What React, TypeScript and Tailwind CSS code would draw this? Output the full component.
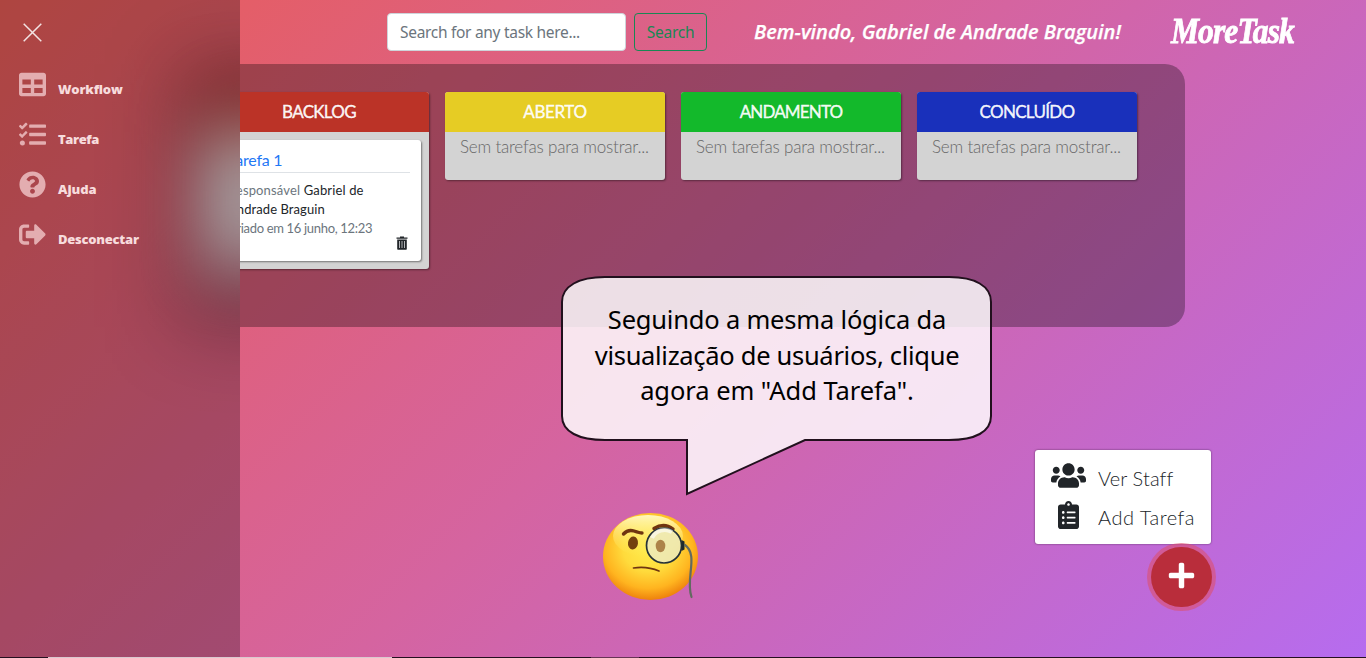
import React from "react";
import { FaTable, FaTasks, FaQuestionCircle, FaSignOutAlt, FaUsers, FaClipboardList, FaPlus } from "react-icons/fa";

const columns = [
  { title: "BACKLOG", color: "bg-[#bb3327]", space: "tracking-[-0.7px]" },
  { title: "ABERTO", color: "bg-[#e6cc24]", space: "tracking-[-0.4px]" },
  { title: "ANDAMENTO", color: "bg-[#13b92b]", space: "tracking-[-0.85px]" },
  { title: "CONCLUÍDO", color: "bg-[#1930bb]", space: "tracking-[-0.7px]" },
];

const links = [
  { label: "Workflow", Icon: FaTable, space: "tracking-[-0.2px]" },
  { label: "Tarefa", Icon: FaTasks, space: "tracking-[-0.4px]" },
  { label: "Ajuda", Icon: FaQuestionCircle, space: "tracking-[-0.05px]" },
  { label: "Desconectar", Icon: FaSignOutAlt, space: "tracking-[-0.25px]" },
];

function TaskCard() {
  return (
    <div className="mx-2 mt-2 flex h-[121px] flex-col rounded-[3px] bg-white px-[11px] pt-[9px] shadow-[1px_1px_2px_rgba(0,0,0,0.45)]">
      <div className="h-6 border-b border-[#dee2e6] font-[Lato] text-[16px] leading-[22px] tracking-[-0.25px] text-[#1f78f5]">Tarefa 1</div>
      <div className="mt-[8px] whitespace-nowrap font-[Lato] text-[13px] leading-[19px] tracking-[0.08px] text-[#6c757d]">
        <div className="tracking-[0.15px]">Responsável <span className="text-[#212529]">Gabriel de</span></div>
        <div className="text-[#212529]">Andrade Braguin</div>
        <div className="tracking-[-0.32px]">Criado em 16 junho, 12:23</div>
      </div>
      <svg className="-mt-[2px] ml-auto mr-[2px] h-[14px] w-[12px] shrink-0" viewBox="0 0 12 14">
        <path d="M4 0.500h4v1h3.500v1.300H0.500V1.500H4zM1.200 3.600h9.600V13q0 .7-.7.7H1.900q-.7 0-.7-.7z" fill="#212529" />
        <path d="M3.500 5v7M6 5v7M8.500 5v7" stroke="#c4c6c8" strokeWidth="0.9" />
      </svg>
    </div>
  );
}

function Monocle() {
  return (
    <svg className="absolute left-[602px] top-[511px] h-[92px] w-[98px]" viewBox="0 0 98 92">
      <defs>
        <radialGradient id="face" cx="0.48" cy="0.4" r="0.6">
          <stop offset="0" stopColor="#ffed4f" />
          <stop offset="0.45" stopColor="#ffdb3c" />
          <stop offset="0.78" stopColor="#ffb41f" />
          <stop offset="1" stopColor="#ee820c" />
        </radialGradient>
        <linearGradient id="shine" x1="0" y1="0" x2="0" y2="1">
          <stop offset="0" stopColor="#fffbc4" stopOpacity="0.95" />
          <stop offset="1" stopColor="#ffec55" stopOpacity="0" />
        </linearGradient>
      </defs>
      <ellipse cx="48.5" cy="45.5" rx="47.5" ry="43.5" fill="url(#face)" />
      <ellipse cx="46" cy="25" rx="35" ry="21" fill="url(#shine)" />
      <path d="M21.500 23Q26 18 32 20T40 22" fill="none" stroke="#6f3510" strokeWidth="3.400" strokeLinecap="round" strokeLinejoin="round" />
      <path d="M52 17.500Q62 11 71 18" fill="none" stroke="#6f3510" strokeWidth="3.400" strokeLinecap="round" />
      <ellipse cx="31" cy="32" rx="5" ry="6.500" fill="#74400e" transform="rotate(8 31 32)" />
      <circle cx="62" cy="34.500" r="17.500" fill="#eee9b8" fillOpacity="0.88" stroke="#263238" strokeWidth="1.700" />
      <path d="M50 27a14 14 0 0 1 20-6" stroke="#fff" strokeOpacity="0.6" strokeWidth="4" fill="none" />
      <ellipse cx="58.500" cy="35" rx="4.800" ry="6.200" fill="#ad8349" />
      <path d="M31.500 57Q45 55 57 60" fill="none" stroke="#6f3510" strokeWidth="1.700" strokeLinecap="round" />
      <path d="M79.500 29l3 1.500v8l-3 1.500z" fill="#1d282c" />
      <path d="M83 34C97 44 83 68 89.500 86" fill="none" stroke="#626a60" strokeWidth="2.200" strokeLinecap="round" />
    </svg>
  );
}

export default function App() {
  return (
    <div className="relative h-[658px] w-[1366px] overflow-hidden bg-[linear-gradient(135deg,#e95c56_0%,#d564a0_50%,#b66cef_100%)] font-['Noto_Sans',sans-serif]">
      <header className="flex h-16 items-center pl-[387px]">
        <input className="h-[38px] w-[239px] rounded-[4px] border border-[#ced4da] bg-white px-3 text-[15.500px] tracking-[-0.3px] placeholder:text-[#6c757d]" placeholder="Search for any task here..." />
        <button className="ml-2 h-[38px] w-[73px] rounded-[4px] border border-[#198754] pt-0.5 text-[15.500px] tracking-[-0.25px] text-[#198754]">Search</button>
        <div className="ml-[47px] w-[368px] whitespace-nowrap font-['Open_Sans'] text-[20px] font-semibold italic tracking-[0px] text-white [-webkit-text-stroke:0.25px_white]">Bem-vindo, Gabriel de Andrade Braguin!</div>
        <div className="ml-[49px] w-[126px] origin-left scale-x-[0.9] whitespace-nowrap font-['Liberation_Serif'] text-[35px] font-bold italic tracking-[-1px] text-white [-webkit-text-stroke:0.8px_white]">MoreTask</div>
      </header>

      <main className="mx-auto flex h-[263px] w-[1004px] items-start gap-4 rounded-[20px] bg-black/30 pl-7 pt-7 [clip-path:inset(0_0_0_59px)]">
        {columns.map((c, i) => (
          <section key={c.title} className={`w-[220px] shrink-0 overflow-hidden rounded-[3px] bg-[#d3d3d3] shadow-[1px_1px_2px_rgba(0,0,0,0.4)] ${i === 0 ? "h-[177px]" : "h-[88px]"}`}>
            <h2 className={`h-10 text-center font-[Lato] text-[17px] leading-[39px] text-white/95 [-webkit-text-stroke:0.4px_rgba(255,255,255,0.9)] ${c.color} ${c.space}`}>{c.title}</h2>
            {i === 0 ? <TaskCard /> : <p className="whitespace-nowrap pl-[15px] font-[Lato] text-[17px] font-light leading-[30px] tracking-[-0.2px] text-[#686868]">Sem tarefas para mostrar...</p>}
          </section>
        ))}
      </main>

      <aside className="absolute left-0 top-0 h-[657px] w-60 overflow-hidden">
        <div className="absolute left-[181px] top-16 h-[263px] w-[138px] bg-black/30 blur-[40px]" />
        <div className="absolute left-[205px] top-[92px] h-[177px] w-[76px] blur-[34px]">
          <div className="h-10 bg-[#bb3327]" />
          <div className="h-[137px] bg-[#e8e8e8]" />
        </div>
        <div className="relative h-full bg-black/25 pt-[23px]">
          <svg className="ml-[23px] h-[19px] w-[19px]" viewBox="0 0 19 19"><path d="M.7.700l17.600 17.600M18.300.700L.7 18.300" stroke="#fff" strokeOpacity=".85" strokeWidth="1.500" /></svg>
          <nav className="mt-[22px] flex flex-col">
            {links.map(({ label, Icon, space }) => (
              <a key={label} className="flex h-[50px] items-start pl-[19px]">
                <Icon className="mt-[7px] h-[27px] w-[27px] text-[#e3adb0]" />
                <span className={`ml-[12px] mt-[15px] font-['Open_Sans'] text-[13px] font-extrabold leading-5 text-[#f7dcdd] ${space}`}>{label}</span>
              </a>
            ))}
          </nav>
        </div>
      </aside>

      <div className="absolute left-[561px] top-[276px] h-[220px] w-[432px]">
        <svg className="absolute inset-0 h-full w-full" viewBox="0 0 432 220">
          <path d="M44 1H388C414 1 430 10 430 26V140C430 156 414 164 388 164H244L126 218V164H44C18 164 1 156 1 140V26C1 10 18 1 44 1Z" fill="#fff" fillOpacity=".83" stroke="#21101d" strokeWidth="2" />
        </svg>
        <div className="relative whitespace-nowrap pt-[26px] text-center text-[25.500px] leading-[35.500px] text-black">
          <div className="tracking-[-0.2px]">Seguindo a mesma lógica da</div>
          <div className="tracking-[-0.3px]">visualização de usuários, clique</div>
          <div className="tracking-[-0.06px]">agora em "Add Tarefa".</div>
        </div>
      </div>
      <Monocle />

      <div className="absolute left-[1035px] top-[450px] flex h-[94px] w-[176px] flex-col rounded-[3px] bg-white pl-4 pt-2 font-[Lato] text-[20px] font-light text-[#212529] shadow-[0_0_2px_rgba(0,0,0,0.6)]">
        <div className="flex h-[39px] items-center"><FaUsers className="-mt-1 h-[35px] w-[35px]" /><span className="ml-3 tracking-[0.1px]">Ver Staff</span></div>
        <div className="flex h-[39px] items-center"><FaClipboardList className="-mt-1 h-[28px] w-[35px]" /><span className="ml-3 whitespace-nowrap tracking-[0.5px]">Add Tarefa</span></div>
      </div>
      <button className="absolute left-[1151px] top-[547px] flex h-[60px] w-[61px] items-center justify-center rounded-full bg-[#b92d3b] shadow-[0_0_0_4px_rgba(220,80,110,0.6)]"><FaPlus className="-mt-[3px] h-[29px] w-[29px] text-white" /></button>
      <div className="absolute left-0 top-[657px] flex h-px w-full bg-[#25101f]"><div className="ml-12 w-[344px] bg-[#d9c9cf]" /><div className="ml-[199px] w-12 bg-[#673454]" /></div>
    </div>
  );
}
